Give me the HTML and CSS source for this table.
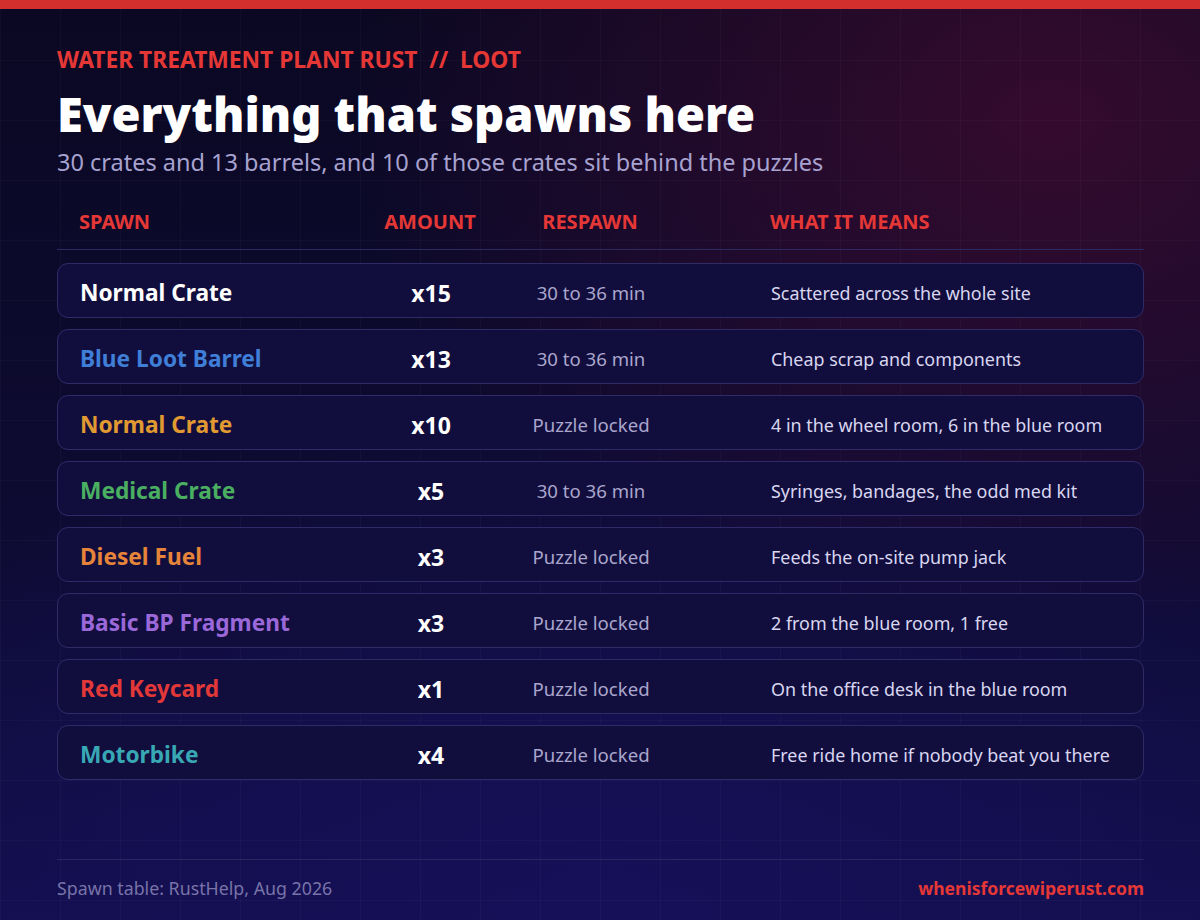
FILE: index.html
```html
<!DOCTYPE html>
<html>
<head>
<meta charset="utf-8">
<link rel="stylesheet" href="styles.css">
</head>
<body>
<div class="page">
  <div class="topbar"></div>
  <div class="content">
    <div class="eyebrow">WATER TREATMENT PLANT RUST&nbsp; //&nbsp; LOOT</div>
    <h1 class="title">Everything that spawns here</h1>
    <div class="subtitle">30 crates and 13 barrels, and 10 of those crates sit behind the puzzles</div>

    <div class="table">
      <div class="thead">
        <div class="c-name">SPAWN</div>
        <div class="c-amt">AMOUNT</div>
        <div class="c-resp">RESPAWN</div>
        <div class="c-desc">WHAT IT MEANS</div>
      </div>
      <div class="row">
        <div class="c-name name white">Normal Crate</div>
        <div class="c-amt amt">x15</div>
        <div class="c-resp resp">30 to 36 min</div>
        <div class="c-desc desc">Scattered across the whole site</div>
      </div>
      <div class="row">
        <div class="c-name name blue">Blue Loot Barrel</div>
        <div class="c-amt amt">x13</div>
        <div class="c-resp resp">30 to 36 min</div>
        <div class="c-desc desc">Cheap scrap and components</div>
      </div>
      <div class="row">
        <div class="c-name name gold">Normal Crate</div>
        <div class="c-amt amt">x10</div>
        <div class="c-resp resp">Puzzle locked</div>
        <div class="c-desc desc">4 in the wheel room, 6 in the blue room</div>
      </div>
      <div class="row">
        <div class="c-name name green">Medical Crate</div>
        <div class="c-amt amt">x5</div>
        <div class="c-resp resp">30 to 36 min</div>
        <div class="c-desc desc">Syringes, bandages, the odd med kit</div>
      </div>
      <div class="row">
        <div class="c-name name orange">Diesel Fuel</div>
        <div class="c-amt amt">x3</div>
        <div class="c-resp resp">Puzzle locked</div>
        <div class="c-desc desc">Feeds the on-site pump jack</div>
      </div>
      <div class="row">
        <div class="c-name name purple">Basic BP Fragment</div>
        <div class="c-amt amt">x3</div>
        <div class="c-resp resp">Puzzle locked</div>
        <div class="c-desc desc">2 from the blue room, 1 free</div>
      </div>
      <div class="row">
        <div class="c-name name red">Red Keycard</div>
        <div class="c-amt amt">x1</div>
        <div class="c-resp resp">Puzzle locked</div>
        <div class="c-desc desc">On the office desk in the blue room</div>
      </div>
      <div class="row">
        <div class="c-name name teal">Motorbike</div>
        <div class="c-amt amt">x4</div>
        <div class="c-resp resp">Puzzle locked</div>
        <div class="c-desc desc">Free ride home if nobody beat you there</div>
      </div>
    </div>

    <div class="footer">
      <div class="source">Spawn table: RustHelp, Aug 2026</div>
      <div class="site">whenisforcewiperust.com</div>
    </div>
  </div>
</div>
</body>
</html>
```
FILE: styles.css
```css
* { box-sizing: border-box; }
html, body { margin: 0; padding: 0; }
body {
  width: 1200px;
  height: 920px;
  overflow: hidden;
  font-family: "Noto Sans", "Open Sans", sans-serif;
  background: #0a0822;
}
.page {
  position: relative;
  width: 1200px;
  height: 920px;
  background:
    linear-gradient(rgba(255,255,255,0.025) 1px, transparent 1px) 0 0 / 60px 60px,
    linear-gradient(90deg, rgba(255,255,255,0.025) 1px, transparent 1px) 0 0 / 60px 60px,
    radial-gradient(ellipse 700px 520px at 1050px 120px, rgba(70,12,50,0.7), rgba(70,12,50,0) 100%),
    radial-gradient(ellipse 900px 500px at 600px 900px, rgba(22,16,90,0.9), rgba(22,16,90,0) 100%),
    linear-gradient(180deg, #0a0822 0%, #0e0b33 60%, #130f4c 100%);
  display: flex;
  flex-direction: column;
}
.topbar {
  height: 9px;
  background: #d32f2d;
  flex: none;
}
.content {
  flex: 1;
  padding: 37px 56px 0 57px;
  display: flex;
  flex-direction: column;
}
.eyebrow {
  color: #e53836;
  font-weight: 700;
  font-size: 22.8px;
  line-height: 28px;
  letter-spacing: 0;
}
.title {
  margin: 11px 0 0;
  color: #ffffff;
  font-weight: 900;
  font-size: 47px;
  line-height: 58px;
  letter-spacing: 0;
}
.subtitle {
  margin-top: 4px;
  color: #a7a2cf;
  font-size: 23.5px;
  line-height: 30px;
}
.table {
  margin-top: 17px;
  display: flex;
  flex-direction: column;
  gap: 11px;
}
.thead, .row {
  display: grid;
  grid-template-columns: 281px 140px 180px 1fr;
  align-items: center;
  padding-left: 22px;
}
.thead {
  height: 56px;
  padding-top: 0;
  padding-bottom: 1px;
  border-bottom: 1px solid #2c2862;
  color: #e53836;
  font-weight: 700;
  font-size: 20px;
  margin-bottom: 2px;
}
.row {
  height: 55px;
  padding-top: 4px;
  background: #110e3e;
  border: 1.5px solid #2f2b68;
  border-radius: 11px;
}
.c-amt, .c-resp { text-align: center; }
.c-desc { padding-left: 90px; }
.name { font-weight: 700; font-size: 22.7px; }
.amt { font-weight: 700; font-size: 23px; color: #ffffff; }
.resp { font-size: 18.6px; color: #aaa6cc; }
.desc { font-size: 17.9px; color: #d9d6f0; }
.white { color: #ffffff; }
.blue { color: #3f7fd8; }
.gold { color: #e19a32; }
.green { color: #4aaf60; }
.orange { color: #e6843a; }
.purple { color: #9a68d8; }
.red { color: #e23838; }
.teal { color: #38a8b4; }
.footer {
  margin-top: auto;
  margin-bottom: 18px;
  border-top: 1px solid #2a2760;
  padding-top: 16px;
  padding-bottom: 2px;
  display: flex;
  justify-content: space-between;
  align-items: center;
  line-height: 24px;
}
.source { color: #7873a8; font-size: 17.8px; }
.site { color: #e53836; font-weight: 700; font-size: 17.5px; }
```
